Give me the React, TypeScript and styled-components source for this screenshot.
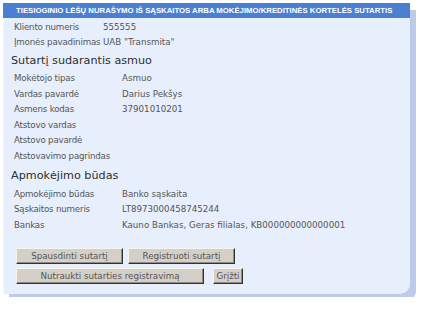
import React from 'react';
import styled, { createGlobalStyle } from 'styled-components';

const GlobalStyle = createGlobalStyle`
  body {
    margin: 0;
    background: #ffffff;
    font-family: 'DejaVu Sans', sans-serif;
  }
`;

const Page = styled.div`
  padding: 3px;
`;

const Panel = styled.div`
  width: 407px;
  height: 291px;
  box-sizing: border-box;
  background: #e7effc;
  border-left: 1px solid #f3f7fe;
  border-radius: 0 0 10px 0;
  box-shadow: 6px 7px 0 #bccbe7;
`;

const TitleBar = styled.div`
  height: 15px;
  margin-left: -1px;
  padding-left: 13px;
  background: #4a7fd2;
  color: #ffffff;
  font: bold 7.75px 'Liberation Sans', sans-serif;
  line-height: 15px;
  white-space: nowrap;
`;

const Body = styled.div`
  padding: 2px 0 0 7px;
`;

const Row = styled.div<{ $label: number; $h: number }>`
  display: grid;
  grid-template-columns: ${(p) => p.$label}px 1fr;
  height: ${(p) => p.$h}px;
  line-height: ${(p) => p.$h}px;
  padding-left: 3px;
  font-size: 8.7px;
  color: #555555;
  white-space: nowrap;
`;

const Label = styled.span`
  letter-spacing: -0.2px;
`;

const Heading = styled.div<{ $h: number }>`
  height: ${(p) => p.$h}px;
  line-height: ${(p) => p.$h}px;
  font-size: 11.2px;
  color: #2e2e2e;
`;

const Buttons = styled.div`
  display: flex;
  flex-direction: column;
  gap: 4px;
  margin-top: 15px;
  padding-left: 5px;
`;

const ButtonRow = styled.div<{ $gap: number }>`
  display: flex;
  gap: ${(p) => p.$gap}px;
`;

const Button = styled.button<{ $w: number }>`
  width: ${(p) => p.$w}px;
  height: 16px;
  padding: 0;
  box-sizing: border-box;
  background: #d4d0c8;
  border: 1px solid;
  border-color: #f6f4f0 #333333 #333333 #f6f4f0;
  box-shadow: inset -1px -1px 0 #8e8a82;
  font-family: 'DejaVu Sans', sans-serif;
  font-size: 8.7px;
  color: #555555;
  line-height: 13px;
`;

type Item = [string, string];

const client: Item[] = [
  ['Kliento numeris', '555555'],
  ['Įmonės pavadinimas', 'UAB "Transmita"'],
];

const person: Item[] = [
  ['Mokėtojo tipas', 'Asmuo'],
  ['Vardas pavardė', 'Darius Pekšys'],
  ['Asmens kodas', '37901010201'],
  ['Atstovo vardas', ''],
  ['Atstovo pavardė', ''],
  ['Atstovavimo pagrindas', ''],
];

const payment: Item[] = [
  ['Apmokėjimo būdas', 'Banko sąskaita'],
  ['Sąskaitos numeris', 'LT8973000458745244'],
  ['Bankas', 'Kauno Bankas, Geras filialas, KB000000000000001'],
];

const App: React.FC = () => (
  <>
    <GlobalStyle />
    <Page>
      <Panel>
        <TitleBar>
          TIESIOGINIO LĖŠŲ NURAŠYMO IŠ SĄSKAITOS ARBA MOKĖJIMO/KREDITINĖS KORTELĖS SUTARTIS
        </TitleBar>
        <Body>
          {client.map(([label, value]) => (
            <Row key={label} $label={89} $h={15}>
              <Label>{label}</Label>
              <span>{value}</span>
            </Row>
          ))}
          <Heading $h={21}>Sutartį sudarantis asmuo</Heading>
          {person.map(([label, value]) => (
            <Row key={label} $label={108} $h={15.6}>
              <Label>{label}</Label>
              <span>{value}</span>
            </Row>
          ))}
          <Heading $h={22}>Apmokėjimo būdas</Heading>
          {payment.map(([label, value]) => (
            <Row key={label} $label={108} $h={15.5}>
              <Label>{label}</Label>
              <span>{value}</span>
            </Row>
          ))}
          <Buttons>
            <ButtonRow $gap={5}>
              <Button $w={107}>Spausdinti sutartį</Button>
              <Button $w={107}>Registruoti sutartį</Button>
            </ButtonRow>
            <ButtonRow $gap={9}>
              <Button $w={188}>Nutraukti sutarties registravimą</Button>
              <Button $w={30}>Grįžti</Button>
            </ButtonRow>
          </Buttons>
        </Body>
      </Panel>
    </Page>
  </>
);

export default App;
